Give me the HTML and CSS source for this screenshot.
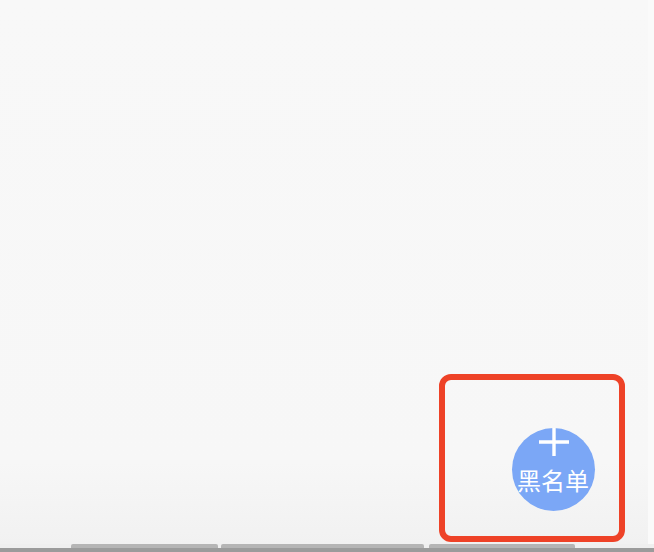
FILE: index.html
```html
<!DOCTYPE html>
<html lang="zh">
<head>
<meta charset="utf-8">
<link rel="stylesheet" href="styles.css">
</head>
<body>
<div class="screen">
  <div class="main">
    <div class="content"></div>
    <div class="edge"></div>
  </div>
  <div class="tabs">
    <span class="seg seg-a"></span>
    <span class="seg seg-b"></span>
    <span class="seg seg-c"></span>
  </div>
  <div class="baseline"></div>

  <div class="highlight"></div>
  <button class="fab" type="button">
    <svg class="plus" width="30" height="29" viewBox="0 0 30 29" aria-hidden="true">
      <path d="M15 0V28M0 14H30" stroke="#fff" stroke-width="3.4" fill="none"/>
    </svg>
    <span class="fab-label">黑名单</span>
  </button>
</div>
</body>
</html>
```

FILE: styles.css
```css
html, body {
  margin: 0;
  padding: 0;
  background: #f7f7f7;
}

.screen {
  position: relative;
  width: 654px;
  height: 552px;
  display: flex;
  flex-direction: column;
  overflow: hidden;
  font-family: "Noto Sans CJK SC", "Noto Sans", sans-serif;
}

.main {
  flex: 1;
  display: flex;
  background: linear-gradient(to bottom, #f8f8f8 0%, #f7f7f7 85%, #f1f1f1 100%);
}

.content {
  flex: 1;
}

.edge {
  width: 6px;
  background: #fafafa;
}

.tabs {
  height: 4px;
  display: flex;
  background: #efefef;
  padding-left: 71px;
}

.seg {
  height: 4px;
  background: #b5b5b5;
  border-radius: 2px 2px 0 0;
}

.seg-a { width: 147px; margin-right: 3px; }
.seg-b { width: 203px; margin-right: 5px; }
.seg-c { width: 146px; }

.baseline {
  height: 4px;
  background: #9b9b9b;
}

.highlight {
  position: absolute;
  left: 439px;
  top: 374px;
  width: 174px;
  height: 156px;
  border: 6px solid #ee4227;
  border-radius: 12px;
}

.fab {
  position: absolute;
  left: 512px;
  top: 428px;
  width: 83px;
  height: 83px;
  border: 0;
  padding: 0;
  border-radius: 50%;
  background: #7ba7f6;
  color: #fff;
  display: flex;
  flex-direction: column;
  align-items: center;
  overflow: visible;
}

.plus {
  display: block;
  margin-top: 0;
}

.fab-label {
  display: block;
  margin-top: 9px;
  margin-left: -1px;
  font-family: "Noto Sans CJK SC", sans-serif;
  font-weight: 400;
  font-size: 24px;
  line-height: 28px;
  white-space: nowrap;
}
```
